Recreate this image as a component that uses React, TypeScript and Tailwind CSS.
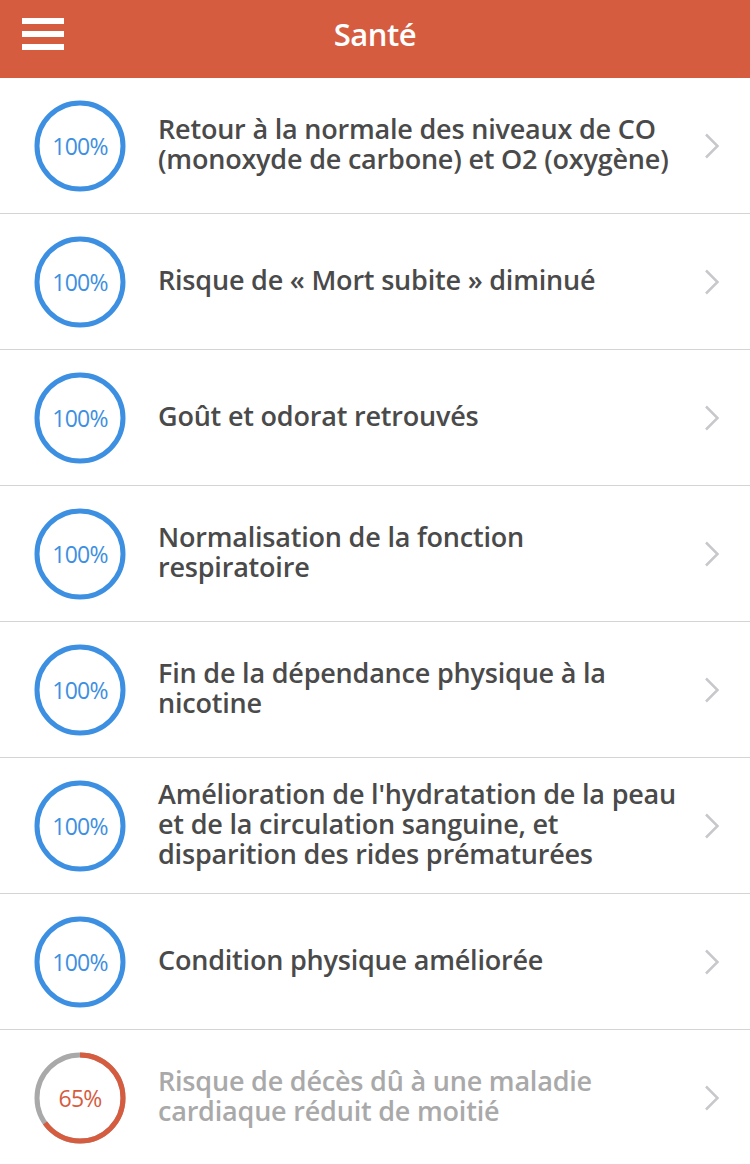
import React from 'react';

type Item = { lines: string[]; percent: number };

const items: Item[] = [
  { lines: ['Retour à la normale des niveaux de CO', '(monoxyde de carbone) et O2 (oxygène)'], percent: 100 },
  { lines: ['Risque de « Mort subite » diminué'], percent: 100 },
  { lines: ['Goût et odorat retrouvés'], percent: 100 },
  { lines: ['Normalisation de la fonction', 'respiratoire'], percent: 100 },
  { lines: ['Fin de la dépendance physique à la', 'nicotine'], percent: 100 },
  {
    lines: ["Amélioration de l'hydratation de la peau", 'et de la circulation sanguine, et', 'disparition des rides prématurées'],
    percent: 100,
  },
  { lines: ['Condition physique améliorée'], percent: 100 },
  { lines: ['Risque de décès dû à une maladie', 'cardiaque réduit de moitié'], percent: 65 },
];

const font = { fontFamily: '"Open Sans", "Noto Sans", sans-serif' };

const Progress: React.FC<{ percent: number }> = ({ percent }) => {
  const done = percent >= 100;
  const r = 43;
  const c = 2 * Math.PI * r;
  return (
    <div className="relative w-[92px] h-[92px] shrink-0">
      <svg width="92" height="92" viewBox="0 0 92 92">
        <circle cx="46" cy="46" r={r} fill="none" stroke={done ? '#3d8fe2' : '#a9a9a9'} strokeWidth="5" />
        {!done && (
          <circle
            cx="46"
            cy="46"
            r={r}
            fill="none"
            stroke="#d65c40"
            strokeWidth="5"
            strokeDasharray={`${(c * percent) / 100} ${c}`}
            transform="rotate(-90 46 46)"
          />
        )}
      </svg>
      <span
        className={`absolute inset-0 flex items-center justify-center pt-[2px] text-[23px] tracking-[-0.8px] ${done ? 'text-[#3d8fe2]' : 'text-[#d65c40]'}`}
      >
        {percent}%
      </span>
    </div>
  );
};

export default function App() {
  return (
    <div className="w-[750px] h-[1164px] bg-white overflow-hidden" style={font}>
      <header className="relative h-[78px] bg-[#d65c40] flex items-start justify-center">
        <div className="absolute left-[22px] top-[18px] flex flex-col gap-[7px]">
          <span className="block w-[42px] h-[6px] bg-white" />
          <span className="block w-[42px] h-[6px] bg-white" />
          <span className="block w-[42px] h-[6px] bg-white" />
        </div>
        <h1 className="mt-[12px] text-white text-[31px] leading-[44px] font-semibold tracking-[-0.5px]">Santé</h1>
      </header>
      <ul>
        {items.map((item, i) => (
          <li key={i} className="h-[136px] flex items-center border-b border-[#d4d4d4] pl-[34px] pr-[30px]">
            <Progress percent={item.percent} />
            <p
              className={`flex-1 ml-[32px] mb-[4px] whitespace-nowrap text-[27px] leading-[30px] font-semibold tracking-[-0.2px] ${item.percent >= 100 ? 'text-[#4a4a4a]' : 'text-[#a9a9a9]'}`}
            >
              {item.lines.map((line, j) => (
                <span key={j} className="block">
                  {line}
                </span>
              ))}
            </p>
            <svg width="16" height="26" viewBox="0 0 16 26" className="shrink-0">
              <path d="M2 1.5 L13.5 13 L2 24.5" fill="none" stroke="#c8c8cc" strokeWidth="2.5" />
            </svg>
          </li>
        ))}
      </ul>
    </div>
  );
}
